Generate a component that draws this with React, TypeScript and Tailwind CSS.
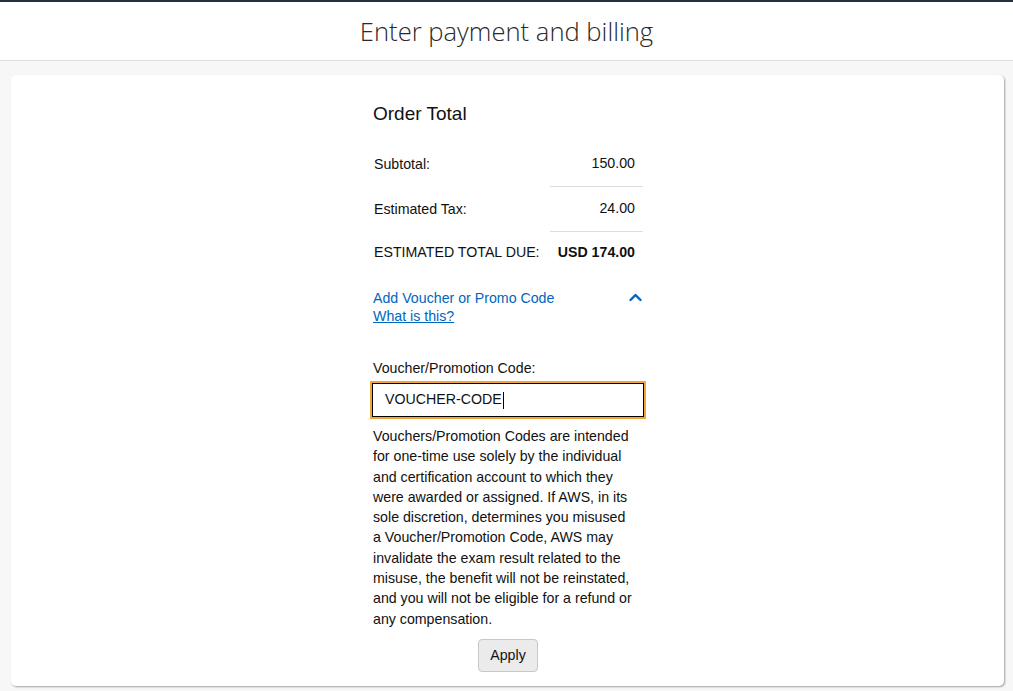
import React from "react";

export default function App() {
  return (
    <div
      className="min-h-[691px] bg-[#f7f7f7] text-[#111] flex flex-col"
      style={{ fontFamily: '"Liberation Sans", Arial, sans-serif' }}
    >
      <header className="bg-white border-t-2 border-t-[#232f3e] border-b border-b-[#dddddd] h-[61px] flex items-center justify-center">
        <h1
          className="text-[25.6px] text-[#2a2a2a] font-light leading-none mt-[2px]"
          style={{ fontFamily: '"Open Sans", sans-serif' }}
        >
          Enter payment and billing
        </h1>
      </header>

      <main className="pl-[11px] pr-[9px] pt-[14px]">
        <div className="bg-white rounded-[5px] shadow-[1px_1px_2px_rgba(0,0,0,0.35)] pt-[27px] pb-[14px]">
          <div className="w-[275px] mx-auto pl-[1px] text-[14.2px]">
            <div className="px-[2px]">
              <h2 className="text-[19px] leading-[24px] text-[#111] mb-[16px]">Order Total</h2>

              <div>
                <div className="flex h-[45px]">
                  <div className="flex-1 flex items-center pl-[1px]">Subtotal:</div>
                  <div className="w-[93px] flex items-center justify-end pr-[8px] border-b border-[#dddddd]">150.00</div>
                </div>
                <div className="flex h-[45px]">
                  <div className="flex-1 flex items-center pl-[1px]">Estimated Tax:</div>
                  <div className="w-[93px] flex items-center justify-end pr-[8px] border-b border-[#dddddd]">24.00</div>
                </div>
                <div className="flex h-[41px]">
                  <div className="flex-1 flex items-center pl-[1px]">ESTIMATED TOTAL DUE:</div>
                  <div className="w-[93px] flex items-center justify-end pr-[8px] font-bold">USD 174.00</div>
                </div>
              </div>

              <div className="mt-[16px] flex items-start justify-between leading-[18px]">
                <div>
                  <div className="text-[#0066c0]">Add Voucher or Promo Code</div>
                  <div className="text-[#0066c0] underline">What is this?</div>
                </div>
                <svg width="13" height="9" viewBox="0 0 13 9" className="mt-[4px] mr-[1px]">
                  <path d="M1.5 7 L6.5 2 L11.5 7" fill="none" stroke="#0066c0" strokeWidth="2.4" strokeLinecap="round" strokeLinejoin="round" />
                </svg>
              </div>
            </div>

            <div className="mt-[34px] leading-[18px] px-[2px]">Voucher/Promotion Code:</div>
            <div className="mt-[6px] h-[34px] border border-black shadow-[0_0_0_2px_#f3a53b] flex items-center pl-[12px] mx-[1px]">
              <span>VOUCHER-CODE</span>
              <span className="inline-block w-px h-[17px] bg-black ml-px" />
            </div>

            <p className="mt-[9px] leading-[20.3px] pl-[2px] w-[264px]">
              Vouchers/Promotion Codes are intended for one-time use solely by the individual and certification account to which they were awarded or assigned. If AWS, in its sole discretion, determines you misused a Voucher/Promotion Code, AWS may invalidate the exam result related to the misuse, the benefit will not be reinstated, and you will not be eligible for a refund or any compensation.
            </p>

            <div className="flex justify-center mt-[10px]">
              <button className="w-[60px] h-[33px] bg-[#ebebeb] border border-[#c8c8c8] rounded-[4px] text-[#111]">
                Apply
              </button>
            </div>
          </div>
        </div>
      </main>
    </div>
  );
}
